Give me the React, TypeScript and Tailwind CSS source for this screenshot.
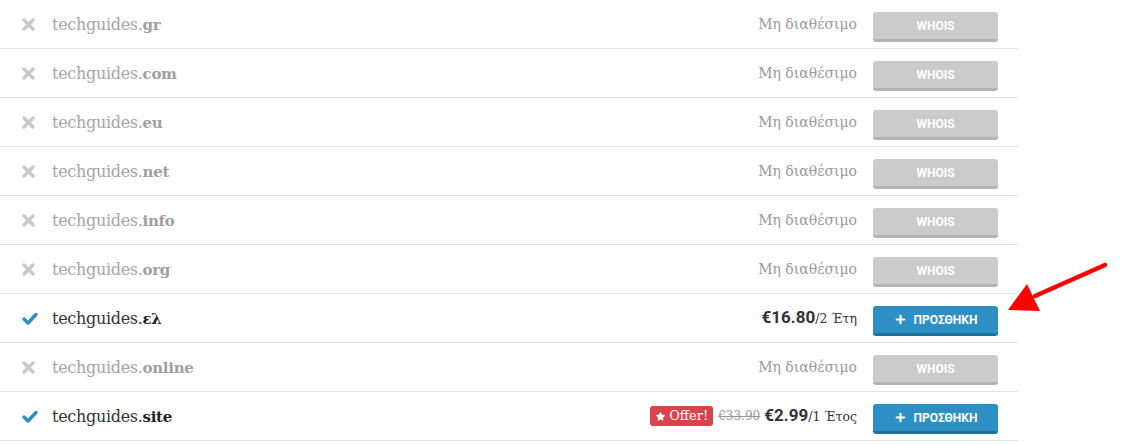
import { Plus, Star } from "lucide-react"

type Row = {
  tld: string
  available: boolean
  price?: string
  period?: string
  oldPrice?: string
  offer?: boolean
}

const rows: Row[] = [
  { tld: "gr", available: false },
  { tld: "com", available: false },
  { tld: "eu", available: false },
  { tld: "net", available: false },
  { tld: "info", available: false },
  { tld: "org", available: false },
  { tld: "ελ", available: true, price: "€16.80", period: "/2 Έτη" },
  { tld: "online", available: false },
  { tld: "site", available: true, price: "€2.99", period: "/1 Έτος", oldPrice: "€33.90", offer: true },
]

const slab = "font-['DejaVu_Serif',serif]"
const sans = "font-['Roboto',sans-serif]"

function CrossIcon() {
  return (
    <svg width="13" height="13" viewBox="0 0 13 13">
      <path d="M2 2 L11 11 M11 2 L2 11" stroke="#c9c9c9" strokeWidth="3.4" strokeLinecap="round" />
    </svg>
  )
}

function CheckIcon() {
  return (
    <svg width="16" height="13" viewBox="0 0 16 13">
      <path d="M2 7 L6 11 L14 2.5" fill="none" stroke="#2e8dbf" strokeWidth="3.4" strokeLinecap="round" strokeLinejoin="round" />
    </svg>
  )
}

function DomainRow({ row }: { row: Row }) {
  return (
    <div className="flex h-[49px] items-center border-b border-[#dbe6ec]">
      <div className="flex w-[52px] pl-[22px]">{row.available ? <CheckIcon /> : <CrossIcon />}</div>
      <div className={`flex-1 text-[16px] tracking-[-0.3px] ${row.available ? "text-[#333]" : "text-[#a5a5a5]"}`}>
        <span className={`${slab} font-light`}>techguides.</span>
        <span className={`${slab} text-[15px] font-bold ${row.available ? "text-[#222]" : "text-[#a0a0a0]"}`}>{row.tld}</span>
      </div>
      <div className="flex items-center pr-[16px]">
        {row.offer && (
          <span className={`${slab} mr-[5px] flex h-[20px] items-center gap-[3px] rounded-[3px] bg-[#d9434c] px-[5px] text-[13px] text-white`}>
            <Star size={11} fill="white" strokeWidth={0} />
            Offer!
          </span>
        )}
        {row.oldPrice && (
          <span className={`${slab} mr-[4px] text-[12px] text-[#999] line-through`}>{row.oldPrice}</span>
        )}
        {row.available ? (
          <span className="text-[#333]">
            <span className={`${sans} text-[17px] font-bold`}>{row.price}</span>
            <span className={`${slab} text-[12.5px]`}>{row.period}</span>
          </span>
        ) : (
          <span className={`${slab} text-[14px] text-[#9a9a9a]`}>Μη διαθέσιμο</span>
        )}
      </div>
      <div className="w-[145px] pt-[6px]">
        {row.available ? (
          <button
            className={`${sans} flex h-[30px] w-[125px] items-center justify-center gap-[7px] rounded-[3px] border-b-[3px] border-[#20719c] bg-[#2e8fc4] text-[12px] font-bold text-white`}
          >
            <Plus size={13} strokeWidth={4} />
            ΠΡΟΣΘΗΚΗ
          </button>
        ) : (
          <button
            className={`${sans} flex h-[30px] w-[125px] items-center justify-center rounded-[3px] border-b-[3px] border-[#b3b3b3] bg-[#cbcbcb] text-[12px] font-bold text-white`}
          >
            WHOIS
          </button>
        )}
      </div>
    </div>
  )
}

export default function App() {
  return (
    <div className="relative h-[444px] w-[1139px] overflow-hidden bg-white">
      <div className="w-[1018px]">
        {rows.map((r) => (
          <DomainRow key={r.tld} row={r} />
        ))}
      </div>
      <svg className="absolute left-[1000px] top-[255px]" width="120" height="65" viewBox="0 0 120 65">
        <line x1="105" y1="10" x2="35" y2="41" stroke="#f00" strokeWidth="4.5" strokeLinecap="round" />
        <polygon points="8,55 27,29 40,56" fill="#f00" />
      </svg>
    </div>
  )
}
